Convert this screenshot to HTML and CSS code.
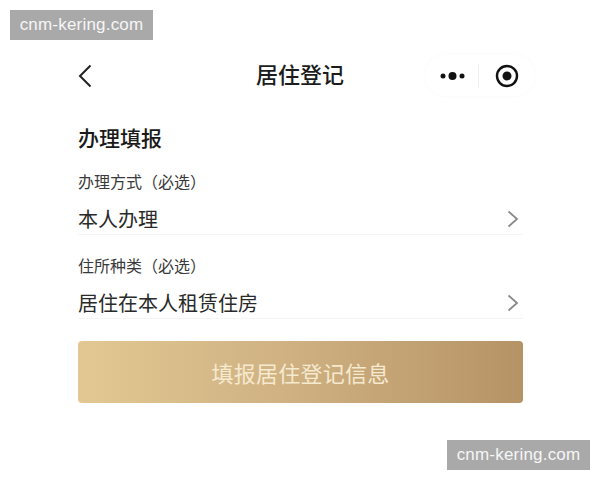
FILE: index.html
```html
<!DOCTYPE html>
<html lang="zh-CN">
<head>
<meta charset="utf-8">
<title>居住登记</title>
<link rel="stylesheet" href="styles.css">
</head>
<body>
<div class="mark mark-top">cnm-kering.com</div>
<main class="page">
  <header class="nav">
    <svg class="back" width="14" height="24" viewBox="0 0 14 24"><path d="M12.500 1.500 2 12l10.500 10.500" fill="none" stroke="#222" stroke-width="2"/></svg>
    <h1 class="title">居住登记</h1>
    <div class="capsule">
      <svg class="dots" width="26" height="10" viewBox="0 0 26 10"><circle cx="3" cy="5" r="2.500" fill="#111"/><circle cx="12.500" cy="5" r="4" fill="#111"/><circle cx="22" cy="5" r="2.500" fill="#111"/></svg>
      <span class="sep"></span>
      <svg class="target" width="24" height="24" viewBox="0 0 24 24"><circle cx="12" cy="12" r="10" fill="none" stroke="#111" stroke-width="2.400"/><circle cx="12" cy="12" r="4.500" fill="#111"/></svg>
    </div>
  </header>
  <h2 class="section">办理填报</h2>
  <section class="field field-first">
    <div class="label">办理方式（必选）</div>
    <div class="row">
      <span class="value">本人办理</span>
      <svg width="12" height="18" viewBox="0 0 12 18"><path d="M1.500 1.500 10 9l-8.500 7.500" fill="none" stroke="#8a8a8a" stroke-width="1.800"/></svg>
    </div>
  </section>
  <section class="field">
    <div class="label">住所种类（必选）</div>
    <div class="row">
      <span class="value">居住在本人租赁住房</span>
      <svg width="12" height="18" viewBox="0 0 12 18"><path d="M1.500 1.500 10 9l-8.500 7.500" fill="none" stroke="#8a8a8a" stroke-width="1.800"/></svg>
    </div>
  </section>
  <button class="submit">填报居住登记信息</button>
</main>
<div class="mark mark-bottom">cnm-kering.com</div>
</body>
</html>
```
FILE: styles.css
```css
* { box-sizing: border-box; }
html, body { margin: 0; padding: 0; }
body {
  width: 600px;
  height: 480px;
  position: relative;
  overflow: hidden;
  background: #fff;
  color: #1c1c1c;
  font-family: "Noto Sans CJK SC", "Liberation Sans", sans-serif;
}
.mark {
  position: absolute;
  width: 143px;
  height: 30px;
  background: #a9a9a9;
  color: #f6f6f6;
  font-family: "Liberation Sans", sans-serif;
  font-size: 17px;
  letter-spacing: 0.2px;
  line-height: 30px;
  text-align: center;
}
.mark-top { left: 10px; top: 10px; }
.mark-bottom { left: 447px; top: 440px; }
.page {
  width: 445px;
  margin-left: 78px;
  padding-top: 55px;
  display: flex;
  flex-direction: column;
}
.nav {
  height: 41px;
  display: flex;
  align-items: center;
  position: relative;
}
.back { flex: none; }
.title {
  margin: 0;
  position: absolute;
  left: 178px;
  width: 88px;
  top: 0;
  font-size: 22px;
  font-weight: 500;
  line-height: 36px;
  white-space: nowrap;
}
.capsule {
  position: absolute;
  left: 347px;
  top: 0;
  width: 110px;
  height: 41px;
  border-radius: 21px;
  box-shadow: 0 0 4px rgba(0, 0, 0, 0.03);
  display: flex;
  align-items: center;
  padding-left: 15px;
}
.sep {
  width: 1px;
  height: 24px;
  background: #eee;
  margin: 0 16px 0 12px;
}
.section {
  margin: 27px 0 0;
  font-size: 21px;
  font-weight: 500;
  line-height: 28px;
  color: #1a1a1a;
}
.field { margin-top: 19px; }
.field-first { margin-top: 19px; }
.label {
  font-size: 16px;
  line-height: 22px;
  color: #3a3a3a;
}
.row {
  height: 40px;
  margin-top: 3px;
  padding-top: 8px;
  display: flex;
  align-items: center;
  justify-content: space-between;
  border-bottom: 1px solid #f5f5f5;
}
.row svg { margin-right: 4px; }
.value {
  font-size: 20px;
  line-height: 28px;
  color: #2a2a2a;
}
.submit {
  display: block;
  width: 445px;
  height: 62px;
  margin-top: 22px;
  padding: 0;
  border: 0;
  border-radius: 4px;
  background: linear-gradient(90deg, #e2c892 0%, #d0b283 45%, #b69365 100%);
  color: #f5e9cf;
  font-family: inherit;
  font-size: 22px;
  letter-spacing: 0.25px;
  text-align: center;
}
```
